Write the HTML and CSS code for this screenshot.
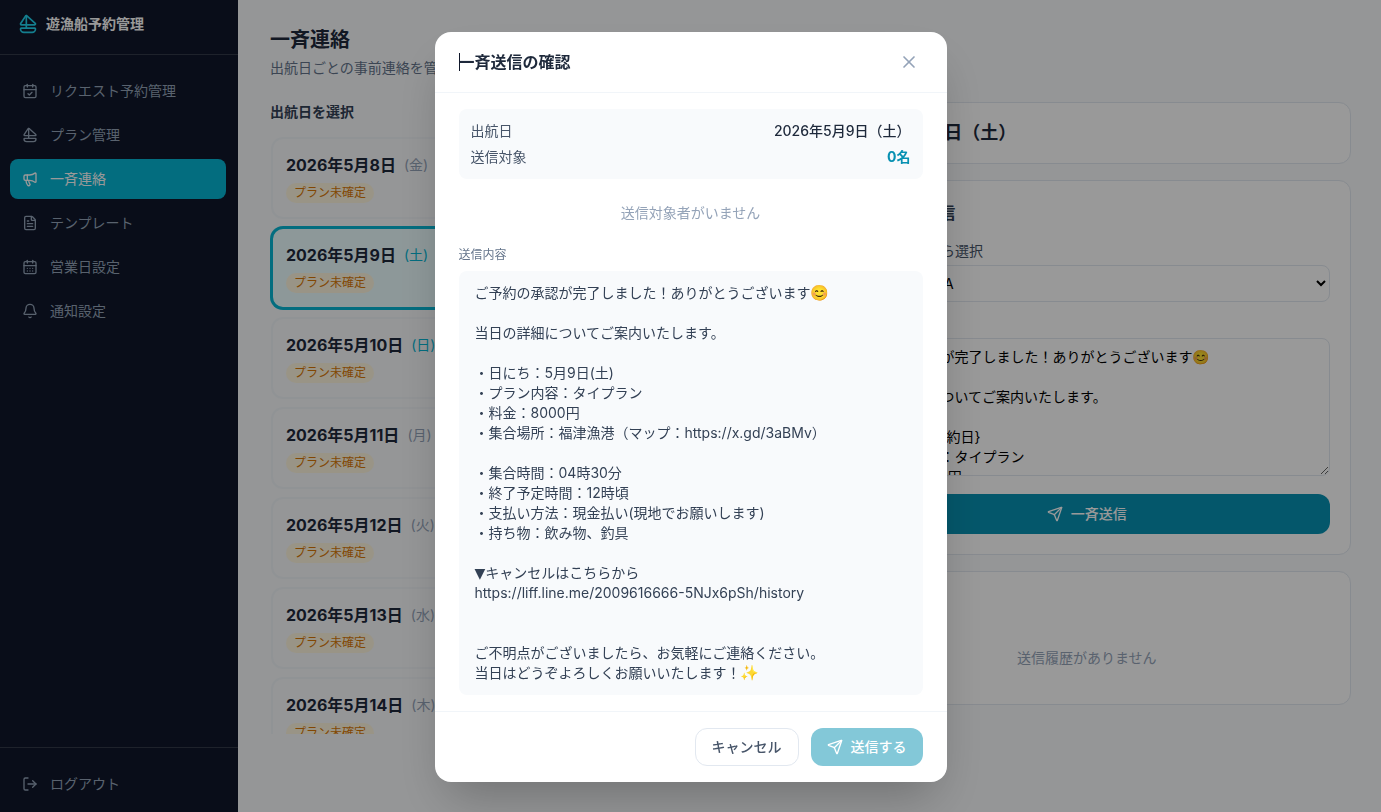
FILE: index.html
```html
<!DOCTYPE html>
<html lang="ja">
<head>
<meta charset="utf-8">
<meta name="viewport" content="width=device-width, initial-scale=1">
<title>遊漁船予約管理</title>
<link rel="stylesheet" href="styles.css">
</head>
<body>
<svg class="sprite" aria-hidden="true">
  <symbol id="i-boat" viewBox="0 0 24 24"><path d="M10 2v15"/><path d="M7 22a4 4 0 0 1-4-4 1 1 0 0 1 1-1h16a1 1 0 0 1 1 1 4 4 0 0 1-4 4z"/><path d="M9.159 2.46a1 1 0 0 1 1.521-.193l9.977 8.98A1 1 0 0 1 20 13H4a1 1 0 0 1-.824-1.567z"/></symbol>
  <symbol id="i-check" viewBox="0 0 24 24"><path d="M8 2v4"/><path d="M16 2v4"/><rect width="18" height="18" x="3" y="4" rx="2"/><path d="M3 10h18"/><path d="m9 16 2 2 4-4"/></symbol>
  <symbol id="i-mega" viewBox="0 0 24 24"><path d="M11 6a13 13 0 0 0 8.4-2.8A1 1 0 0 1 21 4v12a1 1 0 0 1-1.6.8A13 13 0 0 0 11 14H5a2 2 0 0 1-2-2V8a2 2 0 0 1 2-2z"/><path d="M6 14a12 12 0 0 0 2.4 7.2 2 2 0 0 0 3.2-2.4A8 8 0 0 1 10 14"/><path d="M8 6v8"/></symbol>
  <symbol id="i-file" viewBox="0 0 24 24"><path d="M6 22a2 2 0 0 1-2-2V4a2 2 0 0 1 2-2h8a2.4 2.4 0 0 1 1.704.706l3.588 3.588A2.4 2.4 0 0 1 20 8v12a2 2 0 0 1-2 2z"/><path d="M14 2v5a1 1 0 0 0 1 1h5"/><path d="M10 9H8"/><path d="M16 13H8"/><path d="M16 17H8"/></symbol>
  <symbol id="i-days" viewBox="0 0 24 24"><path d="M8 2v4"/><path d="M16 2v4"/><rect width="18" height="18" x="3" y="4" rx="2"/><path d="M3 10h18"/><path d="M8 14h.01"/><path d="M12 14h.01"/><path d="M16 14h.01"/><path d="M8 18h.01"/><path d="M12 18h.01"/><path d="M16 18h.01"/></symbol>
  <symbol id="i-bell" viewBox="0 0 24 24"><path d="M10.268 21a2 2 0 0 0 3.464 0"/><path d="M3.262 15.326A1 1 0 0 0 4 17h16a1 1 0 0 0 .74-1.673C19.41 13.956 18 12.499 18 8A6 6 0 0 0 6 8c0 4.499-1.411 5.956-2.738 7.326"/></symbol>
  <symbol id="i-out" viewBox="0 0 24 24"><path d="m16 17 5-5-5-5"/><path d="M21 12H9"/><path d="M9 21H5a2 2 0 0 1-2-2V5a2 2 0 0 1 2-2h4"/></symbol>
  <symbol id="i-send" viewBox="0 0 24 24"><path d="M14.536 21.686a.5.5 0 0 0 .937-.024l6.5-19a.496.496 0 0 0-.635-.635l-19 6.5a.5.5 0 0 0-.024.937l7.93 3.18a2 2 0 0 1 1.112 1.11z"/><path d="m21.854 2.147-10.94 10.939"/></symbol>
  <symbol id="i-x" viewBox="0 0 24 24"><path d="M18 6 6 18"/><path d="m6 6 12 12"/></symbol>
</svg>

<div class="app">
  <aside class="sidebar">
    <div class="brand"><svg class="icon icon-lg"><use href="#i-boat"/></svg><span>遊漁船予約管理</span></div>
    <nav class="nav">
      <a class="nav-item" href="#"><svg class="icon"><use href="#i-check"/></svg>リクエスト予約管理</a>
      <a class="nav-item" href="#"><svg class="icon"><use href="#i-boat"/></svg>プラン管理</a>
      <a class="nav-item active" href="#" aria-current="page"><svg class="icon"><use href="#i-mega"/></svg>一斉連絡</a>
      <a class="nav-item" href="#"><svg class="icon"><use href="#i-file"/></svg>テンプレート</a>
      <a class="nav-item" href="#"><svg class="icon"><use href="#i-days"/></svg>営業日設定</a>
      <a class="nav-item" href="#"><svg class="icon"><use href="#i-bell"/></svg>通知設定</a>
    </nav>
    <div class="sidebar-foot">
      <button class="nav-item" type="button"><svg class="icon"><use href="#i-out"/></svg>ログアウト</button>
    </div>
  </aside>

  <main class="main">
    <h1 class="page-title">一斉連絡</h1>
    <p class="page-sub">出航日ごとの事前連絡を管理します</p>
    <div class="columns">
      <section class="dates">
        <h2 class="dates-title">出航日を選択</h2>
        <div class="date-list">
          <button class="date-card" type="button"><span class="date-line"><b class="date">2026年5月8日</b><span class="dow">(金)</span></span><span class="badge">プラン未確定</span></button>
          <button class="date-card selected" type="button"><span class="date-line"><b class="date">2026年5月9日</b><span class="dow teal">(土)</span></span><span class="badge">プラン未確定</span></button>
          <button class="date-card" type="button"><span class="date-line"><b class="date">2026年5月10日</b><span class="dow teal">(日)</span></span><span class="badge">プラン未確定</span></button>
          <button class="date-card" type="button"><span class="date-line"><b class="date">2026年5月11日</b><span class="dow">(月)</span></span><span class="badge">プラン未確定</span></button>
          <button class="date-card" type="button"><span class="date-line"><b class="date">2026年5月12日</b><span class="dow">(火)</span></span><span class="badge">プラン未確定</span></button>
          <button class="date-card" type="button"><span class="date-line"><b class="date">2026年5月13日</b><span class="dow">(水)</span></span><span class="badge">プラン未確定</span></button>
          <button class="date-card" type="button"><span class="date-line"><b class="date">2026年5月14日</b><span class="dow">(木)</span></span><span class="badge">プラン未確定</span></button>
        </div>
      </section>

      <section class="details">
        <div class="card card-date"><h2 class="detail-date">2026年5月9日（土）</h2></div>
        <form class="card">
          <h3 class="card-title">メッセージ送信</h3>
          <label class="label" for="template">テンプレートから選択</label>
          <select class="field select" id="template"><option>テンプレートA</option></select>
          <label class="label label-next" for="message">メッセージ</label>
          <textarea class="field textarea" id="message" rows="6">ご予約の承認が完了しました！ありがとうございます😊

当日の詳細についてご案内いたします。

・日にち：{予約日}
・プラン内容：タイプラン
・料金：8000円</textarea>
          <button class="primary" type="button"><svg class="icon"><use href="#i-send"/></svg>一斉送信</button>
        </form>
        <div class="card">
          <h3 class="card-title">送信履歴</h3>
          <p class="history-empty">送信履歴がありません</p>
        </div>
      </section>
    </div>
  </main>
</div>

<div class="overlay">
  <div class="modal" role="dialog" aria-modal="true" aria-labelledby="modal-title">
    <header class="modal-head">
      <h2 class="modal-title" id="modal-title">一斉送信の確認</h2>
      <button class="close" type="button" aria-label="閉じる"><svg class="icon icon-lg"><use href="#i-x"/></svg></button>
    </header>
    <div class="modal-body">
      <dl class="summary">
        <div class="row"><dt>出航日</dt><dd>2026年5月9日（土）</dd></div>
        <div class="row"><dt>送信対象</dt><dd class="count">0名</dd></div>
      </dl>
      <p class="no-target">送信対象者がいません</p>
      <p class="caption">送信内容</p>
      <div class="preview">ご予約の承認が完了しました！ありがとうございます<span class="emoji">😊</span>

当日の詳細についてご案内いたします。

・日にち：5月9日(土)
・プラン内容：タイプラン
・料金：8000円
・集合場所：福津漁港（マップ：https://x.gd/3aBMv）

・集合時間：04時30分
・終了予定時間：12時頃
・支払い方法：現金払い(現地でお願いします)
・持ち物：飲み物、釣具

<span class="mark">▼</span>キャンセルはこちらから
https://liff.line.me/2009616666-5NJx6pSh/history


ご不明点がございましたら、お気軽にご連絡ください。
当日はどうぞよろしくお願いいたします！<span class="emoji">✨</span></div>
    </div>
    <footer class="modal-foot">
      <button class="btn btn-outline" type="button">キャンセル</button>
      <button class="btn btn-send" type="button" disabled><svg class="icon"><use href="#i-send"/></svg>送信する</button>
    </footer>
  </div>
</div>
</body>
</html>
```
FILE: styles.css
```css
* { box-sizing: border-box; margin: 0; padding: 0; }

body {
  font-family: Inter, "Noto Sans CJK JP", "Noto Color Emoji", sans-serif;
  font-size: 14px;
  line-height: 20px;
  color: #1e293b;
  background: #f8fafc;
  overflow: hidden;
}

button, select, textarea { font: inherit; }
button { background: none; border: 0; cursor: pointer; }

.sprite { position: absolute; width: 0; height: 0; }

.icon {
  width: 16px;
  height: 16px;
  flex: none;
  fill: none;
  stroke: currentColor;
  stroke-width: 2;
  stroke-linecap: round;
  stroke-linejoin: round;
}
.icon-lg { width: 20px; height: 20px; }

.app { display: flex; height: 100vh; }

/* Sidebar */
.sidebar {
  width: 238px;
  flex: none;
  display: flex;
  flex-direction: column;
  background: #0f172a;
}
.brand {
  display: flex;
  align-items: center;
  gap: 8px;
  padding: 14px 18px 20px;
  border-bottom: 1px solid rgba(255, 255, 255, 0.15);
  color: #fff;
  font-weight: 700;
}
.brand .icon { color: #22d3ee; }
.nav {
  flex: 1;
  display: flex;
  flex-direction: column;
  gap: 4px;
  padding: 16px 12px 16px 10px;
}
.nav-item {
  display: flex;
  align-items: center;
  gap: 12px;
  width: 100%;
  padding: 10px 12px;
  border-radius: 8px;
  color: #94a3b8;
  text-decoration: none;
}
.nav-item.active { background: #06b6d4; color: #fff; }
.sidebar-foot {
  padding: 16px 12px 8px 10px;
  border-top: 1px solid rgba(255, 255, 255, 0.15);
}

/* Page */
.main { flex: 1; min-width: 0; padding: 26px 30px 24px 32px; }
.page-title { font-size: 20px; line-height: 28px; font-weight: 700; }
.page-sub { margin-top: 4px; color: #64748b; }
.columns {
  display: grid;
  grid-template-columns: 1fr 1fr;
  gap: 24px;
  margin-top: 24px;
}
.dates-title {
  margin-bottom: 15px;
  font-size: 14px;
  font-weight: 600;
  color: #334155;
}
.date-list {
  display: flex;
  flex-direction: column;
  gap: 8px;
  max-height: calc(100vh - 215px);
  padding: 0 1px;
  overflow: hidden;
}
.date-card {
  display: flex;
  flex-direction: column;
  align-items: flex-start;
  flex: none;
  gap: 6px;
  padding: 14px 13px;
  border: 2px solid #f1f5f9;
  border-radius: 12px;
  color: #1e293b;
}
.date-card.selected {
  border-color: #06b6d4;
  background: #ecfeff;
  box-shadow: 0 0 0 1px #06b6d4;
}
.date-line { display: flex; align-items: center; gap: 8px; }
.date { font-size: 16px; line-height: 24px; font-weight: 700; }
.dow { color: #94a3b8; }
.dow.teal { color: #06b6d4; }
.badge {
  padding: 0 8px;
  border-radius: 10px;
  background: #fff7e0;
  color: #d97706;
  font-size: 12px;
}

.details { display: flex; flex-direction: column; gap: 16px; }
.card {
  padding: 20px;
  border: 1px solid #e2e8f0;
  border-radius: 12px;
  background: #fff;
}
.card-date { padding: 16px; }
.detail-date { font-size: 18px; line-height: 28px; font-weight: 600; }
.card-title {
  margin-bottom: 16px;
  font-size: 16px;
  line-height: 24px;
  font-weight: 600;
  color: #334155;
}
.label { display: block; margin-bottom: 4px; color: #475569; }
.label-next { margin-top: 12px; }
.field {
  display: block;
  width: 100%;
  border: 1px solid #e2e8f0;
  border-radius: 8px;
  background: #fff;
  color: #000;
}
.select { height: 37px; padding: 0 0 0 12px; }
.textarea { padding: 8px 12px; resize: vertical; overflow: hidden; }
.primary {
  display: flex;
  align-items: center;
  justify-content: center;
  gap: 8px;
  width: 100%;
  margin-top: 18px;
  padding: 10px 16px;
  border-radius: 12px;
  background: #0891b2;
  color: #fff;
  font-weight: 500;
}
.history-empty { padding: 16px 0; text-align: center; color: #94a3b8; }

/* Dialog */
.overlay {
  position: fixed;
  inset: 0;
  display: flex;
  justify-content: center;
  align-items: flex-start;
  padding: 32px 16px;
  background: rgba(0, 0, 0, 0.4);
}
.modal {
  width: 100%;
  max-width: 512px;
  border-radius: 16px;
  background: #fff;
  box-shadow: 0 25px 50px -12px rgba(0, 0, 0, 0.25);
}
.modal-head {
  display: flex;
  align-items: center;
  justify-content: space-between;
  padding: 16px 24px;
  border-bottom: 1px solid #f1f5f9;
}
.modal-title {
  position: relative;
  font-size: 16px;
  line-height: 24px;
  font-weight: 600;
}
.modal-title::before {
  content: "";
  position: absolute;
  left: 0;
  top: 3px;
  width: 1px;
  height: 18px;
  background: #0f172a;
}
.close { display: flex; padding: 4px; color: #94a3b8; }
.modal-body { padding: 16px 24px; }
.summary {
  display: flex;
  flex-direction: column;
  gap: 6px;
  padding: 12px;
  border-radius: 8px;
  background: #f8fafc;
}
.row { display: flex; justify-content: space-between; }
.row dt { color: #475569; }
.row dd { font-weight: 500; }
.row .count { font-weight: 700; color: #0891b2; }
.no-target { padding: 24px 0; text-align: center; color: #94a3b8; }
.caption {
  margin-bottom: 8px;
  font-size: 12px;
  line-height: 16px;
  color: #64748b;
}
.preview {
  padding: 12px 16px;
  border-radius: 8px;
  background: #f8fafc;
  color: #334155;
  white-space: pre-wrap;
  overflow-wrap: anywhere;
}
.emoji { font-size: 15px; line-height: 1; }
.mark { font-family: "DejaVu Sans", sans-serif; line-height: 1; }
.modal-foot {
  display: flex;
  justify-content: flex-end;
  gap: 12px;
  padding: 16px 24px;
  border-top: 1px solid #f1f5f9;
}
.btn {
  display: flex;
  align-items: center;
  gap: 8px;
  height: 38px;
  padding: 0 16px;
  border-radius: 12px;
  font-weight: 500;
}
.btn-outline { border: 1px solid #e2e8f0; color: #475569; }
.btn-send { background: #0891b2; color: #fff; opacity: 0.5; }
```
